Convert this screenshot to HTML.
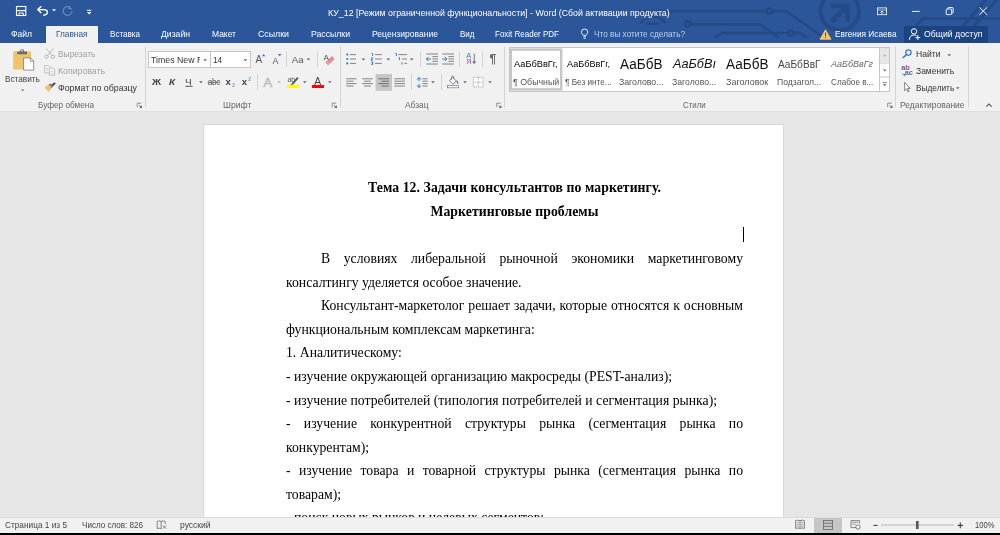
<!DOCTYPE html>
<html lang="ru">
<head>
<meta charset="utf-8">
<title>КУ_12 [Режим ограниченной функциональности] - Word</title>
<style>
html,body{margin:0;padding:0;}
body{width:1000px;height:535px;overflow:hidden;position:relative;background:#e6e6e6;font-family:"Liberation Sans",sans-serif;}
#all{position:absolute;left:0;top:0;width:1000px;height:535px;filter:blur(0.3px);}
.abs{position:absolute;}
.t{position:absolute;white-space:nowrap;transform-origin:0 50%;}
#titlebar{left:0;top:0;width:1000px;height:43px;background:#2b579a;overflow:hidden;}
#tab-home{left:46px;top:26px;width:52px;height:18px;background:#f1f1f1;}
#share{left:904px;top:26px;width:84px;height:17px;background:#1c4480;}
#ribbon{left:0;top:43px;width:1000px;height:68px;background:#f1f1f1;}
#docarea{left:0;top:111px;width:1000px;height:406px;background:#e6e6e6;overflow:hidden;}
.dl{position:absolute;left:286px;width:457px;height:24px;line-height:24px;font-family:"Liberation Serif",serif;font-size:13.72px;color:#000;white-space:nowrap;}
.dc{text-align:center;}
.db{font-weight:bold;letter-spacing:0.08px;}
.dj{text-align:justify;text-align-last:justify;white-space:normal;}
.di{left:321px;width:422px;}
#doctext{left:0;top:0;width:1000px;height:517px;overflow:hidden;}
#status{left:0;top:517px;width:1000px;height:16px;background:#f1f1f1;}
#blackbar{left:0;top:533px;width:1000px;height:2px;background:#000;}
#cursor{left:743px;top:227px;width:1px;height:15px;background:#000;}
svg{position:absolute;overflow:hidden;}
</style>
</head>
<body>
<div id="all">
<div id="titlebar" class="abs">
<svg class="abs" style="left:0;top:0" width="1000" height="38" viewBox="0 0 1000 38">
<g fill="none" stroke="#244a87" stroke-width="2.7">
<path d="M640.5 23 Q653 9.5 665.5 23"/>
<path d="M645.5 23.8 H659"/>
<path d="M637 11.1 H766.6"/>
<circle cx="769.3" cy="11.1" r="2.6"/>
<path d="M772 11.1 H786 L824 37.4"/>
<circle cx="687.6" cy="23.8" r="2.6"/>
<path d="M690.2 24.5 H760 L779 37.8"/>
<path d="M714 38 L722 33 H788"/>
<circle cx="790.7" cy="32.9" r="2.6"/>
<path d="M793.4 32.9 H799 L807.5 38.5"/>
<path d="M916 26 L923 18.7 H1000"/>
<path d="M962 27 L986.5 -1" stroke-width="3"/>
<path d="M973 27 L997.5 -1" stroke-width="3"/>
</g>
<circle cx="839.7" cy="10.9" r="19.3" fill="none" stroke="#244a87" stroke-width="4"/>
<path d="M830.8 3.6 H850 V22 H845.4 V11.6 L833.6 23.4 L830 19.8 L841.6 8.2 H830.8 Z" fill="#244a87"/>
</svg>

<div id="tab-home" class="abs"></div>
<div id="share" class="abs"></div>
<svg class="abs" style="left:0;top:0" width="1000" height="44" viewBox="0 0 1000 44">
<!-- save -->
<g fill="none" stroke="#fff" stroke-width="1.1">
<rect x="16.5" y="6.5" width="9.3" height="9"/>
<path d="M16.5 10.6 H25.8" stroke-width="1.3"/>
<path d="M19 15.5 V13 H23.3 V15.5" stroke-width="1"/>
</g>
<!-- undo -->
<g fill="none" stroke="#fff" stroke-width="1.4" stroke-linecap="butt" stroke-linejoin="miter">
<path d="M41.3 6.3 L37.8 9.6 L41.3 12.9"/>
<path d="M38 9.6 H43.6 Q47.4 9.6 47.4 12.2 Q47.4 14.9 43.2 15.2"/>
</g>
<path d="M52 9.3 H56 L54 11.6 Z" fill="#fff"/>
<!-- redo faded -->
<g fill="none" stroke="#6a88b8" stroke-width="1.2">
<path d="M70.5 7.6 A4.4 4.4 0 1 0 72 10.9"/>
<path d="M69.2 6 V8.6 H72"/>
</g>
<!-- customize QAT -->
<path d="M87 10.3 H91.3" stroke="#fff" stroke-width="1" fill="none"/>
<path d="M86.9 12 H91.4 L89.15 14.5 Z" fill="#fff"/>
<!-- lightbulb -->
<g fill="none" stroke="#fff" stroke-width="0.9">
<path d="M583.3 35.3 Q581.4 33.6 581.4 32.2 A3.2 3.2 0 0 1 587.8 32.2 Q587.8 33.6 585.9 35.3 Z"/>
<path d="M583.3 36.8 H585.9 M583.6 38.3 H585.6"/>
</g>
<!-- warning -->
<path d="M825.5 29.8 L831 39.3 H820 Z" fill="#f3c669" stroke="#f3c669" stroke-width="0.8" stroke-linejoin="round"/>
<path d="M825.5 32.6 V36.3 M825.5 37.2 V38.2" stroke="#5a4a20" stroke-width="1" fill="none"/>
<!-- share person -->
<g fill="none" stroke="#fff" stroke-width="1">
<circle cx="914" cy="31.4" r="2.7"/>
<path d="M909.4 39.8 Q909.6 35.2 914 35 Q915.8 35 916.6 35.6"/>
<path d="M915.4 37.6 H920.2 M917.8 35.2 V40"/>
</g>
<!-- window controls -->
<g fill="none" stroke="#fff" stroke-width="0.9">
<rect x="877.4" y="7.9" width="9.2" height="6.8" stroke-width="0.8"/>
<path d="M877.4 10 H886.6" stroke-width="0.6"/>
<path d="M882 14 V11.2 M880.4 12.6 L882 11 L883.6 12.6" stroke-width="0.8"/>
<path d="M912 11.4 H919.8"/>
<rect x="946.2" y="9" width="5.4" height="5.6" rx="0.8"/>
<path d="M947.8 9 V8.2 Q947.8 7.5 948.5 7.5 H952.4 Q953.1 7.5 953.1 8.2 V12.4 Q953.1 13.1 952.4 13.1 H951.6"/>
<path d="M979.3 7.3 L987.2 14.9 M987.2 7.3 L979.3 14.9"/>
</g>
</svg>

</div>
<div id="ribbon" class="abs"></div>
<svg class="abs" style="left:0;top:43px" width="1000" height="68" viewBox="0 43 1000 68">
<!-- group separators -->
<g stroke="#d4d4d4" stroke-width="1" fill="none">
<path d="M145.5 46.5 V107.5 M340.5 46.5 V107.5 M504.5 46.5 V107.5 M895.5 46.5 V107.5 M968.5 46.5 V107.5"/>
<path d="M286.5 51.5 V67 M317.5 51.5 V67 M257.5 74 V90 M420.5 51.5 V67 M459.5 51.5 V67 M482.5 51.5 V67 M411.5 74 V90 M441.5 74 V90"/>
</g>
<!-- dialog launchers -->
<g id="dl">
<path d="M137.2 107.2 V103.2 H141.2" fill="none" stroke="#777" stroke-width="0.8"/>
<path d="M139 105 L141 107" fill="none" stroke="#666" stroke-width="0.9"/>
<path d="M142 105.2 V108 H139.2 Z" fill="#666"/>
</g>
<use href="#dl" x="195"/>
<use href="#dl" x="359.5"/>
<use href="#dl" x="750.5"/>
<!-- collapse chevron -->
<path d="M986.3 106.6 L989 104 L991.7 106.6" fill="none" stroke="#555" stroke-width="1.1"/>

<!-- paste -->
<rect x="13.2" y="51.2" width="17.8" height="18.4" rx="1" fill="#eec36b"/>
<path d="M17.3 54.2 V51.6 H20.3 V50.6 Q20.3 49.2 22.1 49.2 Q24 49.2 24 50.6 V51.6 H27 V54.2 Z" fill="#6a6a6a"/>
<rect x="21.2" y="50.2" width="1.8" height="1.2" fill="#f1f1f1"/>
<path d="M23.6 57.9 H30.6 L33.7 61 V70.1 H23.6 Z" fill="#fff" stroke="#7a7a7a" stroke-width="0.8"/>
<path d="M30.4 58 V61.2 H33.6" fill="none" stroke="#7a7a7a" stroke-width="0.8"/>
<path d="M21.1 89.4 H24.3 L22.7 91.3 Z" fill="#666"/>
<!-- cut -->
<g fill="none" stroke="#b4b4b4" stroke-width="0.9">
<path d="M46.3 48.5 L52.3 55.8 M53.3 48.5 L47.3 55.8"/>
<circle cx="46.6" cy="56.8" r="1.7"/>
<circle cx="53" cy="56.8" r="1.7"/>
</g>
<!-- copy -->
<g fill="#f6f6f6" stroke="#b4b4b4" stroke-width="0.8">
<path d="M44.6 65.6 H48.3 L50.2 67.5 V72.8 H44.6 Z"/>
<path d="M49.2 68 H52.8 L54.8 70 V75.2 H49.2 Z"/>
</g>
<g stroke="#c4b8c8" stroke-width="0.7" fill="none">
<path d="M45.8 68.5 H48 M45.8 70.3 H48 M50.6 71.4 H53.4 M50.6 73.2 H53.4"/>
</g>
<!-- format painter -->
<path d="M44.3 87.3 L48.6 84.8 L51.8 88 L48.6 92 Z" fill="#eec36b"/>
<path d="M48.5 84.6 L50 83.4 L53 86.6 L51.9 88 Z" fill="#777"/>
<path d="M51 84.4 L54.6 82.3 L55.8 83.5 L53 86.4 Z" fill="#555"/>

<!-- font name & size boxes -->
<rect x="148.5" y="51.5" width="62" height="16" fill="#fff" stroke="#c6c6c6"/>
<rect x="210.5" y="51.5" width="40" height="16" fill="#fff" stroke="#c6c6c6"/>
<path d="M203.4 59.2 H207 L205.2 61.2 Z" fill="#666"/>
<path d="M243.6 59.2 H247.2 L245.4 61.2 Z" fill="#666"/>
</svg>

<svg class="abs" style="left:0;top:43px" width="1000" height="68" viewBox="0 43 1000 68">
<defs>
<path id="dd" d="M0 0 H3.6 L1.8 2 Z" fill="#666"/>
</defs>
<!-- font row1: grow/shrink triangles -->
<path d="M261.8 56.2 L263.6 54 L265.4 56.2 Z" fill="#3a78c8"/>
<path d="M277.8 54 H281.6 L279.7 56.3 Z" fill="#3a78c8"/>
<use href="#dd" x="306.6" y="58.6"/>
<!-- eraser -->
<path d="M325.3 62.3 L331.9 56.1 L334.7 59 L328.1 65.2 Z" fill="#e8899b"/>
<path d="M326.5 61.2 L329.3 64.1" stroke="#f6c6ce" stroke-width="0.7" fill="none"/>
<!-- font row2 -->
<path d="M185.4 86.3 H192.6" stroke="#444" stroke-width="0.9" fill="none"/>
<use href="#dd" x="199.2" y="81.2"/>
<path d="M207.6 82.3 H220.2" stroke="#555" stroke-width="0.7" fill="none"/>
<use href="#dd" x="277.4" y="81.2" opacity="0.45"/>
<!-- highlight pen -->
<rect x="287" y="85" width="12" height="3" fill="#ffff00"/>
<path d="M291.6 83.6 L297.2 77 L298.6 78.2 L293.2 84.6 Z" fill="#555"/>
<path d="M290.4 84.8 L291.6 83.4 L293.2 84.6 L292.2 84.8 Z" fill="#555"/>
<use href="#dd" x="303" y="81.2"/>
<!-- font color -->
<rect x="312" y="85" width="12" height="3" fill="#ff0000"/>
<use href="#dd" x="328" y="81.2"/>

<!-- paragraph row1 -->
<!-- bullets -->
<g fill="#3a78c8">
<circle cx="347.3" cy="54.6" r="1.1"/><circle cx="347.3" cy="59" r="1.1"/><circle cx="347.3" cy="63.4" r="1.1"/>
</g>
<g stroke="#777" stroke-width="0.9" fill="none">
<path d="M350 54.6 H356 M350 59 H356 M350 63.4 H356"/>
</g>
<use href="#dd" x="361.6" y="58.6"/>
<!-- numbering -->
<g stroke="#3a78c8" stroke-width="0.9" fill="none">
<path d="M371.4 53.4 H372.6 V56 M371.2 57.8 H372.8 V59 H371.2 V60.3 H372.8 M371.2 62 H372.8 V64.6 H371.2 M371.6 63.3 H372.8"/>
</g>
<g stroke="#777" stroke-width="0.9" fill="none">
<path d="M375 54.6 H381.8 M375 59 H381.8 M375 63.4 H381.8"/>
</g>
<use href="#dd" x="386.4" y="58.6"/>
<!-- multilevel -->
<g stroke="#3a78c8" stroke-width="0.9" fill="none">
<path d="M395.4 53.4 H396.4 V56 M398.6 57.8 H400 M399.4 57.8 V60.2 M402 62 V64.6"/>
</g>
<g stroke="#777" stroke-width="0.9" fill="none">
<path d="M398.4 54.6 H407 M402 59 H407 M404.4 63.4 H407"/>
</g>
<use href="#dd" x="410" y="58.6"/>
<!-- decrease indent -->
<g stroke="#777" stroke-width="0.9" fill="none">
<path d="M426.2 54 H438 M432.4 56.6 H438 M432.4 59 H438 M432.4 61.4 H438 M426.2 64 H438"/>
<path d="M442.2 54 H454 M448.4 56.6 H454 M448.4 59 H454 M448.4 61.4 H454 M442.2 64 H454"/>
</g>
<g stroke="#3a78c8" stroke-width="1" fill="none">
<path d="M426.4 59 H431 M428.4 56.9 L426.4 59 L428.4 61.1"/>
<path d="M442.2 59 H446.8 M444.8 56.9 L446.8 59 L444.8 61.1"/>
</g>
<!-- sort arrow -->
<path d="M474.2 53.6 V62" stroke="#777" stroke-width="1" fill="none"/><path d="M472.2 61.4 H476.2 L474.2 64 Z" fill="#666"/>
<!-- paragraph row2 -->
<g stroke="#777" stroke-width="0.9" fill="none">
<path d="M346.2 78.8 H356.6 M346.2 81.2 H353.6 M346.2 83.6 H356.6 M346.2 86 H353.6"/>
<path d="M362.2 78.8 H372.8 M364 81.2 H371 M362.2 83.6 H372.8 M364 86 H371"/>
</g>
<rect x="375.6" y="74" width="16.4" height="16.8" fill="#c6c6c6"/>
<g stroke="#666" stroke-width="0.9" fill="none">
<path d="M378.4 78.8 H389 M381.4 81.2 H389 M378.4 83.6 H389 M381.4 86 H389"/>
</g>
<g stroke="#777" stroke-width="0.9" fill="none">
<path d="M394.4 78.8 H405 M394.4 81.2 H405 M394.4 83.6 H405 M394.4 86 H405"/>
</g>
<!-- line spacing -->
<g stroke="#3a78c8" stroke-width="1" fill="none">
<path d="M419 77.6 V81.2 M419 83.8 V87.4 M417 79.6 L419 77.4 L421 79.6 M417 85.4 L419 87.6 L421 85.4"/>
</g>
<g stroke="#777" stroke-width="0.9" fill="none">
<path d="M422.4 78.8 H427.6 M422.4 81.2 H427.6 M422.4 83.6 H427.6 M422.4 86 H427.6"/>
</g>
<use href="#dd" x="431.2" y="81.2"/>
<!-- shading -->
<rect x="447.4" y="85.4" width="11.2" height="2.4" fill="#fff" stroke="#777" stroke-width="0.7"/>
<path d="M449.4 80.6 L452.6 77.6 L456.4 81 L453 84.2 Z" fill="#fff" stroke="#666" stroke-width="0.8"/>
<path d="M451.6 79.8 V77 Q451.6 76 452.8 76 Q453.8 76 453.8 77 V79" fill="none" stroke="#666" stroke-width="0.7"/>
<path d="M456.6 80.6 Q458.6 81.4 458 84 Q456.8 82.4 456.6 80.6 Z" fill="#3a78c8" stroke="#3a78c8" stroke-width="0.5"/>
<use href="#dd" x="463.2" y="81.2"/>
<!-- borders -->
<g stroke="#a8a8a8" stroke-width="0.8" fill="#fff" stroke-dasharray="1.2 0.6">
<path d="M473.4 77.4 H483 V87 H473.4 Z M478.2 77.4 V87 M473.4 82.2 H483"/>
</g>
<use href="#dd" x="488.2" y="81.2"/>

<!-- styles gallery -->
<rect x="509.5" y="47.5" width="380" height="44" fill="#fff" stroke="#c6c6c6"/>
<rect x="510.8" y="49.6" width="50.4" height="39.8" fill="none" stroke="#c6c6c6" stroke-width="2.4"/>
<path d="M879.5 48 V91 M879.5 63 H889 M879.5 77 H889" stroke="#c6c6c6" fill="none"/>
<rect x="880" y="48" width="9" height="14.5" fill="#e6e6e6"/>
<path d="M882.9 56.2 L884.7 54.2 L886.5 56.2 Z" fill="#b0b0b0"/>
<use href="#dd" x="882.9" y="69.4"/>
<path d="M882.6 82.6 H886.8" stroke="#666" stroke-width="0.8" fill="none"/>
<use href="#dd" x="882.9" y="84.2"/>

<!-- editing -->
<g fill="none" stroke="#3a78c8" stroke-width="1.2">
<circle cx="908.4" cy="52.6" r="2.7"/>
<path d="M906.4 54.8 L902.6 58" stroke-width="1.6"/>
</g>
<use href="#dd" x="947.4" y="54.2"/>
<path d="M902.4 73.4 Q902.8 75.4 905 75.2 M903.8 76 L905.2 75.2 L904.4 73.8" stroke="#3a78c8" stroke-width="0.8" fill="none"/>
<path d="M904.6 82.4 V90.6 L906.6 88.8 L908 91.8 L909 91.3 L907.7 88.4 H910.2 Z" fill="#fff" stroke="#555" stroke-width="0.7"/>
<use href="#dd" x="956" y="87.2"/>
</svg>

<div id="docarea" class="abs"><svg class="abs" style="left:0;top:0" width="1000" height="406" viewBox="0 111 1000 406"><path d="M0 111 H1000" stroke="#d8d8d8" stroke-width="1.2" fill="none"/><rect x="203.8" y="124.5" width="579.6" height="420" fill="#fff" stroke="#d2d2d2" stroke-width="0.8"/></svg></div>
<div id="doctext" class="abs">
<div class="dl dc db" style="top:176.47px">Тема 12. Задачи консультантов по маркетингу.</div>
<div class="dl dc db" style="top:200.04px">Маркетинговые проблемы</div>
<div class="dl dj di" style="top:247.18px">В условиях либеральной рыночной экономики маркетинговому</div>
<div class="dl dleft" style="top:270.75px">консалтингу уделяется особое значение.</div>
<div class="dl dj di" style="top:294.32px">Консультант-маркетолог решает задачи, которые относятся к основным</div>
<div class="dl dleft" style="top:317.89px">функциональным комплексам маркетинга:</div>
<div class="dl dleft" style="top:341.46px">1. Аналитическому:</div>
<div class="dl dleft" style="top:365.03px">- изучение окружающей организацию макросреды (PEST-анализ);</div>
<div class="dl dleft" style="top:388.60px">- изучение потребителей (типология потребителей и сегментация рынка);</div>
<div class="dl dj" style="top:412.17px">- изучение конкурентной структуры рынка (сегментация рынка по</div>
<div class="dl dleft" style="top:435.74px">конкурентам);</div>
<div class="dl dj" style="top:459.31px">- изучение товара и товарной структуры рынка (сегментация рынка по</div>
<div class="dl dleft" style="top:482.88px">товарам);</div>
<div class="dl dleft" style="top:506.45px">- поиск новых рынков и целевых сегментов;</div>
<div id="cursor" class="abs"></div>
</div>
<div id="status" class="abs"></div>
<div id="blackbar" class="abs"></div>
<svg class="abs" style="left:0;top:517px" width="1000" height="16" viewBox="0 517 1000 16">
<path d="M0 517.5 H1000" stroke="#dcdcdc" stroke-width="1" fill="none"/>
<!-- proofing -->
<g fill="none" stroke="#666" stroke-width="0.8">
<path d="M161.2 521.4 Q159 520.4 157.2 521.4 V528.6 Q159 527.6 161.2 528.6 Z"/>
<path d="M161.2 521.4 Q163.2 520.4 165.2 521.4 V524"/>
<path d="M163 525.4 L166 528.6 M166 525.4 L163 528.6"/>
</g>
<!-- read mode -->
<g fill="none" stroke="#666" stroke-width="0.8">
<path d="M800 520.6 Q797.8 519.8 795.6 520.6 V528.4 Q797.8 527.6 800 528.4 Q802.2 527.6 804.4 528.4 V520.6 Q802.2 519.8 800 520.6 V528.4"/>
<path d="M796.8 522.6 H798.8 M796.8 524.4 H798.8 M796.8 526.2 H798.8 M801.2 522.6 H803.2 M801.2 524.4 H803.2 M801.2 526.2 H803.2" stroke-width="0.6"/>
</g>
<!-- print layout selected -->
<rect x="814" y="518" width="28" height="15" fill="#c6c6c6"/>
<g fill="none" stroke="#666" stroke-width="0.8">
<rect x="823.4" y="520.4" width="9.2" height="9"/>
<path d="M823.4 523.2 H832.6 M823.4 526.4 H832.6"/>
</g>
<!-- web layout -->
<g fill="none" stroke="#666" stroke-width="0.8">
<path d="M857.6 527.6 H851 V520.6 H859.6 V523.4"/>
<path d="M852.2 522.4 H858.4 M852.2 524.2 H856" stroke-width="0.6"/>
<circle cx="858" cy="527" r="2.2" fill="#f1f1f1"/>
</g>
<!-- zoom slider -->
<path d="M873.4 525.4 H877.6" stroke="#444" stroke-width="1.1" fill="none"/>
<path d="M881 525 H954" stroke="#a8a8a8" stroke-width="0.8" fill="none"/>
<rect x="916" y="521" width="2.6" height="8" fill="#555"/>
<path d="M957.6 525.4 H963 M960.3 522.6 V528.2" stroke="#444" stroke-width="1.1" fill="none"/>
</svg>

<span class="t" style="left:328.3px;top:7.09px;font-size:9.27px;line-height:13px;color:#fff;transform:scaleX(0.9514);">КУ_12 [Режим ограниченной функциональности] - Word (Сбой активации продукта)</span>
<span class="t" style="left:11px;top:27.10px;font-size:9.8px;line-height:14px;color:#fff;transform:scaleX(0.8716);">Файл</span>
<span class="t" style="left:56px;top:27.10px;font-size:9.8px;line-height:14px;color:#2b579a;transform:scaleX(0.8446);">Главная</span>
<span class="t" style="left:109.5px;top:27.10px;font-size:9.8px;line-height:14px;color:#fff;transform:scaleX(0.8237);">Вставка</span>
<span class="t" style="left:161px;top:27.10px;font-size:9.8px;line-height:14px;color:#fff;transform:scaleX(0.8805);">Дизайн</span>
<span class="t" style="left:212px;top:27.10px;font-size:9.8px;line-height:14px;color:#fff;transform:scaleX(0.8654);">Макет</span>
<span class="t" style="left:258px;top:27.10px;font-size:9.8px;line-height:14px;color:#fff;transform:scaleX(0.8986);">Ссылки</span>
<span class="t" style="left:311px;top:27.10px;font-size:9.8px;line-height:14px;color:#fff;transform:scaleX(0.8867);">Рассылки</span>
<span class="t" style="left:372px;top:27.10px;font-size:9.8px;line-height:14px;color:#fff;transform:scaleX(0.8724);">Рецензирование</span>
<span class="t" style="left:459.5px;top:27.10px;font-size:9.8px;line-height:14px;color:#fff;transform:scaleX(0.8176);">Вид</span>
<span class="t" style="left:495px;top:27.10px;font-size:9.8px;line-height:14px;color:#fff;transform:scaleX(0.8163);">Foxit Reader PDF</span>
<span class="t" style="left:594px;top:27.10px;font-size:9.8px;line-height:14px;color:#c3cfe4;transform:scaleX(0.8402);">Что вы хотите сделать?</span>
<span class="t" style="left:834.5px;top:27.10px;font-size:9.8px;line-height:14px;color:#fff;transform:scaleX(0.8443);">Евгения Исаева</span>
<span class="t" style="left:924px;top:27.10px;font-size:9.8px;line-height:14px;color:#fff;transform:scaleX(0.8887);">Общий доступ</span>
<span class="t" style="left:4.7px;top:72.40px;font-size:9.8px;line-height:14px;color:#444;transform:scaleX(0.8403);">Вставить</span>
<span class="t" style="left:58px;top:47.10px;font-size:9.8px;line-height:14px;color:#a0a0a0;transform:scaleX(0.8605);">Вырезать</span>
<span class="t" style="left:58px;top:64.40px;font-size:9.8px;line-height:14px;color:#a0a0a0;transform:scaleX(0.8910);">Копировать</span>
<span class="t" style="left:58px;top:81.30px;font-size:9.8px;line-height:14px;color:#333;transform:scaleX(0.8992);">Формат по образцу</span>
<span class="t" style="left:38px;top:97.90px;font-size:9.8px;line-height:14px;color:#666;transform:scaleX(0.8411);">Буфер обмена</span>
<div class="abs" style="left:151.2px;top:52.60px;width:48.8px;height:14px;overflow:hidden"><span class="t" style="left:0;top:0;font-size:9.8px;line-height:14px;color:#333;transform:scaleX(0.8959);">Times New Roman</span></div>
<span class="t" style="left:213.4px;top:52.60px;font-size:9.8px;line-height:14px;color:#333;transform:scaleX(0.8436);">14</span>
<span class="t" style="left:222.7px;top:97.90px;font-size:9.8px;line-height:14px;color:#666;transform:scaleX(0.8841);">Шрифт</span>
<span class="t" style="left:405px;top:97.90px;font-size:9.8px;line-height:14px;color:#666;transform:scaleX(0.8550);">Абзац</span>
<span class="t" style="left:682.7px;top:97.90px;font-size:9.8px;line-height:14px;color:#666;transform:scaleX(0.8075);">Стили</span>
<span class="t" style="left:899.5px;top:97.90px;font-size:9.8px;line-height:14px;color:#666;transform:scaleX(0.8641);">Редактирование</span>
<span class="t" style="left:915.5px;top:46.90px;font-size:9.8px;line-height:14px;color:#333;transform:scaleX(0.8760);">Найти</span>
<span class="t" style="left:915.5px;top:64.40px;font-size:9.8px;line-height:14px;color:#333;transform:scaleX(0.8676);">Заменить</span>
<span class="t" style="left:915.5px;top:81.40px;font-size:9.8px;line-height:14px;color:#333;transform:scaleX(0.8451);">Выделить</span>
<span class="t" style="left:514px;top:57.27px;font-size:9.9px;line-height:14px;color:#000;transform:scaleX(0.9366);">АаБбВвГг,</span>
<span class="t" style="left:512.7px;top:75.10px;font-size:9.8px;line-height:14px;color:#555;transform:scaleX(0.9026);">¶ Обычный</span>
<span class="t" style="left:567px;top:57.27px;font-size:9.9px;line-height:14px;color:#000;transform:scaleX(0.9216);">АаБбВвГг,</span>
<span class="t" style="left:565px;top:75.10px;font-size:9.8px;line-height:14px;color:#555;transform:scaleX(0.8379);">¶ Без инте...</span>
<span class="t" style="left:620px;top:53.63px;font-size:14.06px;line-height:20px;color:#111;transform:scaleX(0.9663);">АаБбВ</span>
<span class="t" style="left:618.5px;top:75.10px;font-size:9.8px;line-height:14px;color:#555;transform:scaleX(0.8908);">Заголово...</span>
<span class="t" style="left:672.7px;top:54.92px;font-size:13.21px;line-height:18px;color:#111;font-style:italic;transform:scaleX(0.9629);">АаБбВı</span>
<span class="t" style="left:671.5px;top:75.10px;font-size:9.8px;line-height:14px;color:#555;transform:scaleX(0.8848);">Заголово...</span>
<span class="t" style="left:725.5px;top:53.63px;font-size:14.06px;line-height:20px;color:#111;transform:scaleX(0.9663);">АаБбВ</span>
<span class="t" style="left:725.5px;top:75.10px;font-size:9.8px;line-height:14px;color:#555;transform:scaleX(0.9183);">Заголовок</span>
<span class="t" style="left:778px;top:56.51px;font-size:10.65px;line-height:15px;color:#444;transform:scaleX(0.9501);">АаБбВвГ</span>
<span class="t" style="left:776.8px;top:75.10px;font-size:9.8px;line-height:14px;color:#555;transform:scaleX(0.8769);">Подзагол...</span>
<span class="t" style="left:831px;top:57.30px;font-size:9.8px;line-height:14px;color:#666;font-style:italic;transform:scaleX(0.9193);">АаБбВвГг</span>
<span class="t" style="left:830.7px;top:75.10px;font-size:9.8px;line-height:14px;color:#555;transform:scaleX(0.8320);">Слабое в...</span>
<span class="t" style="left:255.4px;top:53.33px;font-size:10px;line-height:14px;color:#555;">A</span>
<span class="t" style="left:272.6px;top:54.95px;font-size:8.8px;line-height:12px;color:#555;">A</span>
<span class="t" style="left:291.8px;top:52.77px;font-size:9.6px;line-height:13px;color:#555;">Aa</span>
<span class="t" style="left:323.6px;top:52.13px;font-size:8px;line-height:11px;color:#555;">A</span>
<span class="t" style="left:151.6px;top:75.17px;font-size:9.6px;line-height:13px;color:#444;font-weight:700;transform:scale(1.04,1.001);transform-origin:0 76%;">Ж</span>
<span class="t" style="left:169px;top:75.17px;font-size:9.6px;line-height:13px;color:#444;font-weight:700;font-style:italic;transform:scale(1.04,1.001);transform-origin:0 76%;">К</span>
<span class="t" style="left:185.4px;top:75.17px;font-size:9.6px;line-height:13px;color:#444;transform:scale(1.04,1.001);transform-origin:0 76%;">Ч</span>
<span class="t" style="left:207.8px;top:76.66px;font-size:8.2px;line-height:11px;color:#555;letter-spacing:-0.3px;">abc</span>
<span class="t" style="left:225.6px;top:75.17px;font-size:9.6px;line-height:13px;color:#444;font-weight:700;">x</span>
<span class="t" style="left:232.2px;top:82.44px;font-size:4.8px;line-height:7px;color:#5b9bd5;font-weight:700;">2</span>
<span class="t" style="left:241.8px;top:75.17px;font-size:9.6px;line-height:13px;color:#444;font-weight:700;">x</span>
<span class="t" style="left:248.2px;top:75.84px;font-size:4.8px;line-height:7px;color:#5b9bd5;font-weight:700;">2</span>
<span class="t" style="left:263.6px;top:73.50px;font-size:13px;line-height:18px;color:#f1f1f1;-webkit-text-stroke:0.7px #b8b8b8;">A</span>
<span class="t" style="left:287.6px;top:74.57px;font-size:7px;line-height:10px;color:#555;letter-spacing:-0.3px;">ab</span>
<span class="t" style="left:314.2px;top:73.70px;font-size:10.4px;line-height:15px;color:#444;">A</span>
<span class="t" style="left:466.2px;top:51.04px;font-size:7.4px;line-height:10px;color:#3a78c8;">А</span>
<span class="t" style="left:466.2px;top:57.14px;font-size:7.4px;line-height:10px;color:#9a4cb0;">Я</span>
<span class="t" style="left:489.6px;top:50.94px;font-size:12px;line-height:17px;color:#666;font-weight:700;">¶</span>
<span class="t" style="left:901.2px;top:62.64px;font-size:7.4px;line-height:10px;color:#666;font-weight:700;">a</span>
<span class="t" style="left:905.2px;top:62.64px;font-size:7.4px;line-height:10px;color:#9a4cb0;font-weight:700;">b</span>
<span class="t" style="left:904.8px;top:68.24px;font-size:7.4px;line-height:10px;color:#666;font-weight:700;">a</span>
<span class="t" style="left:908.8px;top:68.24px;font-size:7.4px;line-height:10px;color:#3a78c8;font-weight:700;">c</span>
<span class="t" style="left:5px;top:519.33px;font-size:9.16px;line-height:13px;color:#444;transform:scaleX(0.9033);">Страница 1 из 5</span>
<span class="t" style="left:82px;top:519.33px;font-size:9.16px;line-height:13px;color:#444;transform:scaleX(0.8811);">Число слов: 826</span>
<span class="t" style="left:180px;top:519.33px;font-size:9.16px;line-height:13px;color:#444;transform:scaleX(0.9282);">русский</span>
<span class="t" style="left:974.6px;top:519.33px;font-size:9.16px;line-height:13px;color:#444;transform:scaleX(0.8368);">100%</span>
</div>
</body>
</html>
